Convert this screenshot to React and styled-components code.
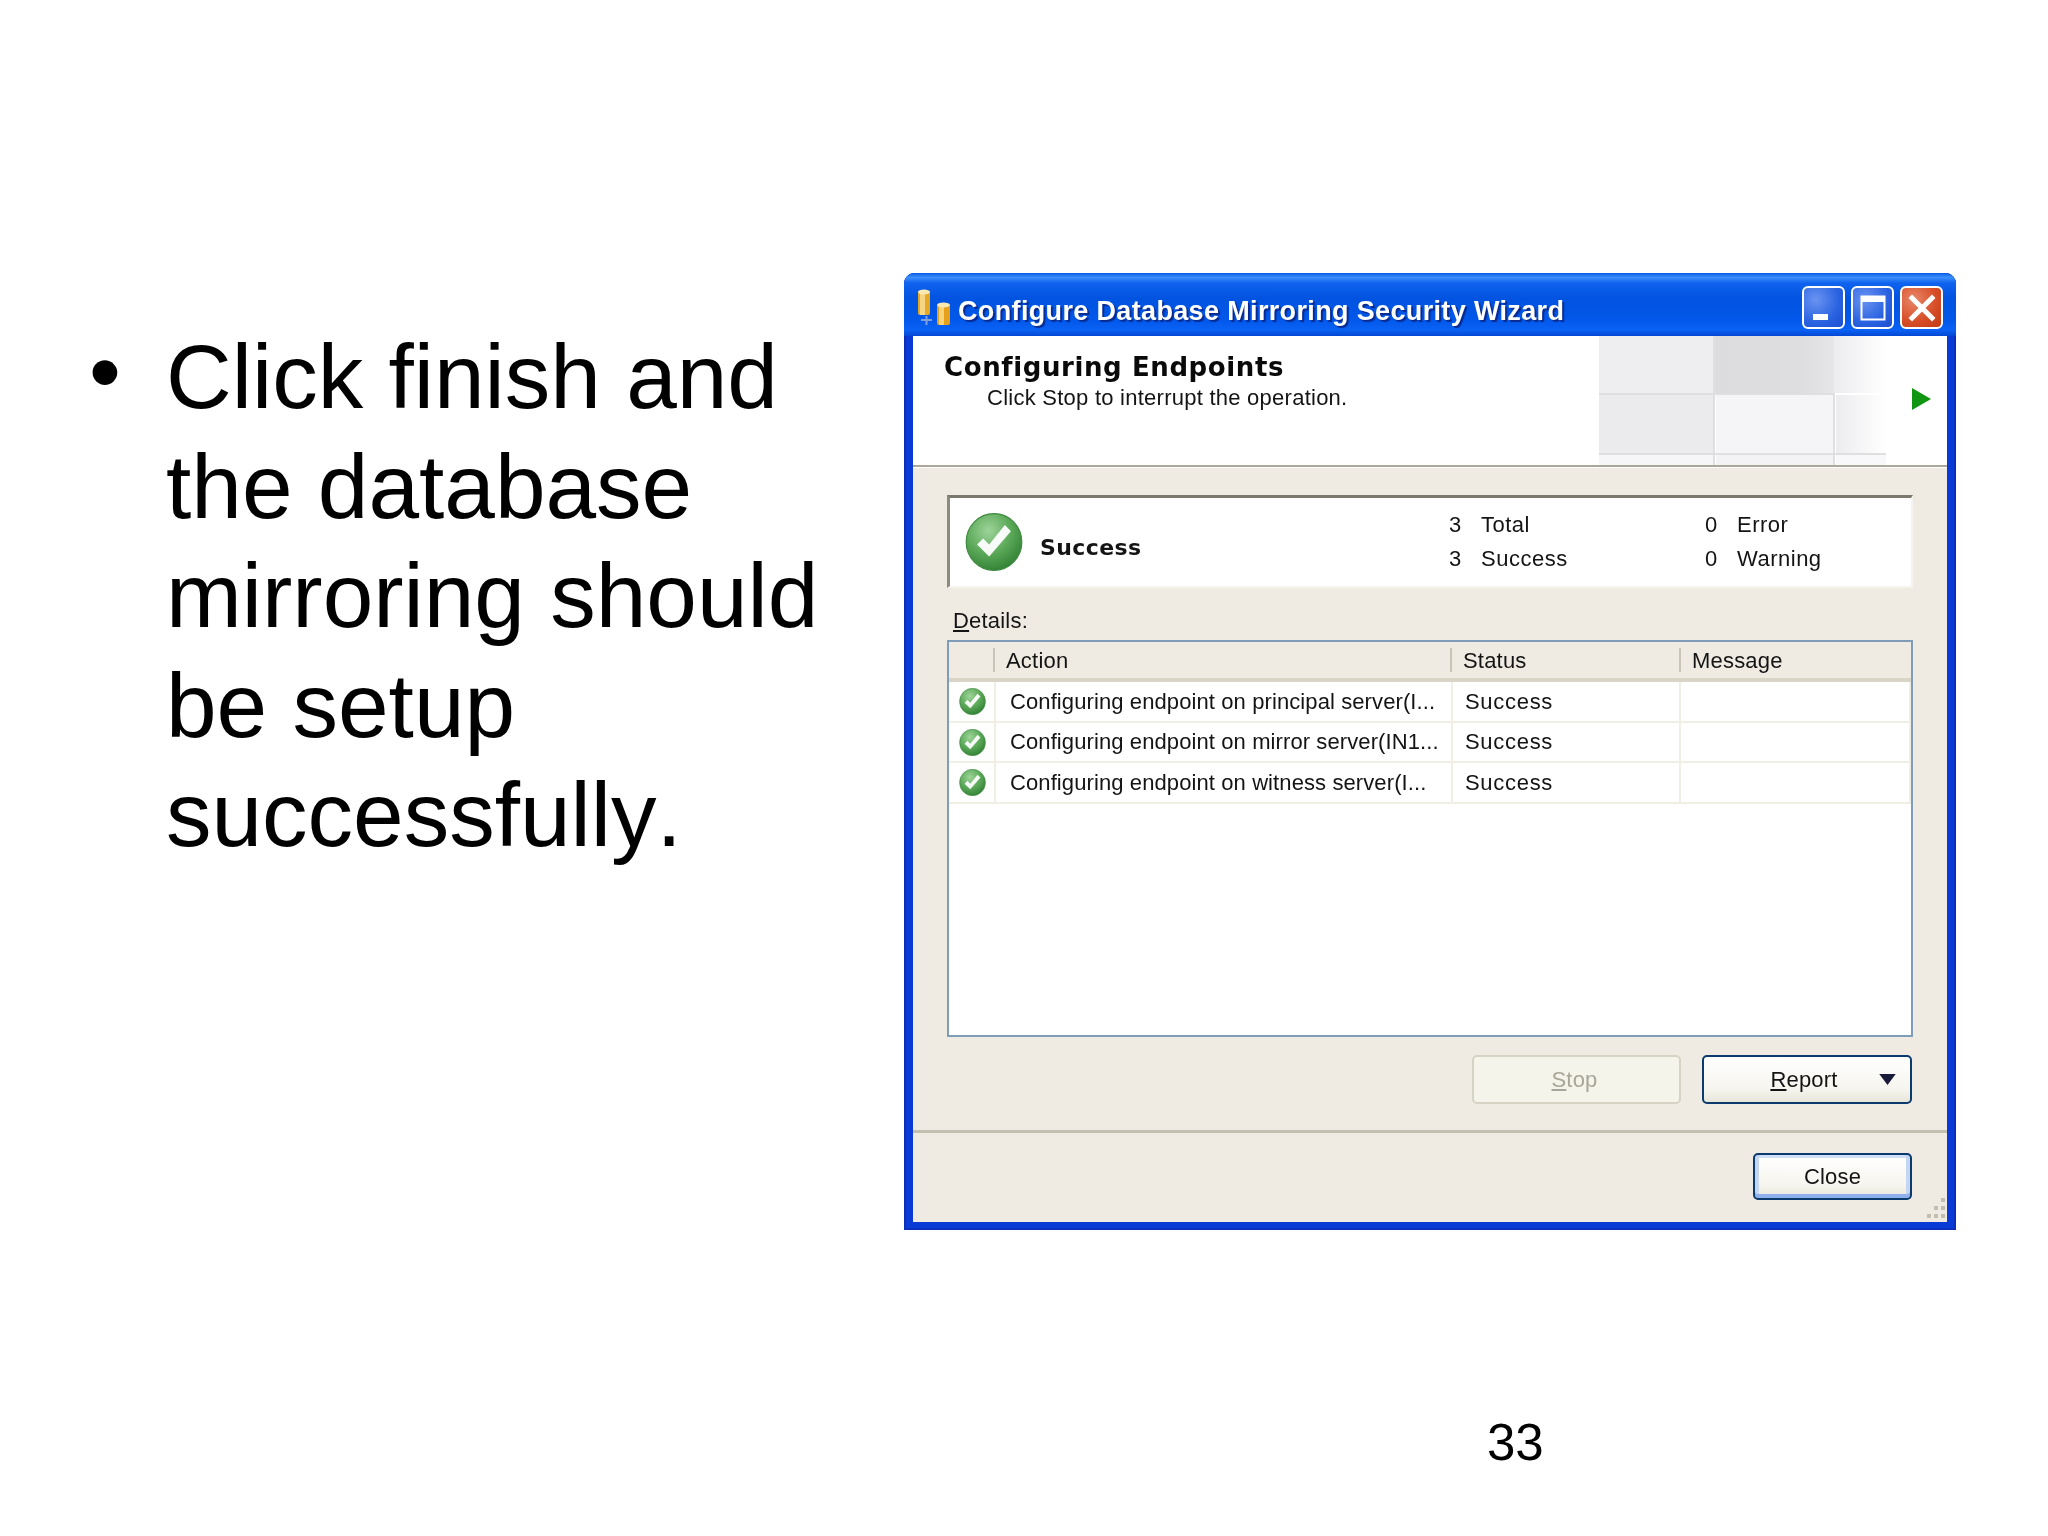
import React from "react"
import styled, {createGlobalStyle} from "styled-components"

const GlobalStyle = createGlobalStyle`
    html, body {
        margin: 0;
        background: #fff;
    }
`

const colors = {
    face: "#efebe2",
    text: "#141414",
    line: "#f1efe4",
    tableBorder: "#7f9db9",
}

const dialogFont = `"Liberation Sans", Arial, sans-serif`

const Slide = styled.div`
    width: 2048px;
    height: 1536px;
    box-sizing: border-box;
    padding: 273px 92px 0;
    display: grid;
    grid-template-columns: 812px 1052px;
    grid-template-rows: auto auto;
    align-content: start;
    font-family: "Liberation Sans", Arial, sans-serif;
    color: #000;
`

const Bullet = styled.div`
    display: flex;
    margin-top: 49px;
    font-size: 91px;
    line-height: 109.6px;
    font-kerning: none;
`

const BulletMark = styled.span`
    width: 77px;
    flex: none;
    margin: -5px 0 0 -3px;
`

const PageNumber = styled.div`
    grid-column: 1 / 3;
    margin-top: 183px;
    padding-left: 1395px;
    font-size: 51px;
`

const Window = styled.div`
    display: flex;
    flex-direction: column;
    height: 957px;
    box-sizing: border-box;
    padding: 0 9px 8px;
    border-radius: 11px 11px 0 0;
    background: #0a3ad6;
    box-shadow: inset 2px 0 0 #0a2fb8, inset -2px 0 0 #0a2fb8, inset 0 -2px 0 #0a2fb8;
    font-family: ${dialogFont};
    font-size: 22px;
    letter-spacing: 0.2px;
    color: ${colors.text};
    filter: blur(0.45px);
`

const TitleBar = styled.div`
    display: flex;
    align-items: center;
    flex: none;
    height: 63px;
    margin: 0 -9px;
    padding: 6px 13px 0 13px;
    box-sizing: border-box;
    border-radius: 11px 11px 0 0;
    background: linear-gradient(180deg, #0a5be8 0%, #3c8efb 7%, #0f63ee 16%, #0253e0 40%, #0258ea 75%, #0a62f4 90%, #0447d4 100%);
`

const TitleText = styled.div`
    flex: 1;
    margin: 7px 0 0 5px;
    font-family: "Liberation Sans", Arial, sans-serif;
    font-weight: 700;
    font-size: 27px;
    letter-spacing: 0.35px;
    color: #fff;
    text-shadow: 2px 2px 1px #0a2a90;
    white-space: nowrap;
`

const Controls = styled.div`
    display: flex;
    gap: 6px;
`

const ControlButton = styled.div`
    display: flex;
    align-items: center;
    justify-content: center;
    width: 43px;
    height: 43px;
    box-sizing: border-box;
    border: 2px solid #fff;
    border-radius: 6px;
    background: ${props => props.$danger
        ? "radial-gradient(circle at 30% 30%, #e8886a, #d8502a 55%, #c23a14)"
        : "radial-gradient(circle at 30% 30%, #6a94f2, #2a62e0 60%, #1c4fd0)"};
`

const Header = styled.div`
    display: flex;
    flex: none;
    height: 129px;
    background: #fff;
`

const HeaderText = styled.div`
    flex: 1;
    padding: 15px 0 0 31px;
`

const HeaderTitle = styled.div`
    font-family: "DejaVu Sans", Verdana, sans-serif;
    font-weight: 700;
    font-size: 26px;
    line-height: 32px;
    letter-spacing: 0.6px;
    color: #0a0a0a;
`

const HeaderHint = styled.div`
    margin-left: 43px;
    line-height: 30px;
    letter-spacing: 0.25px;
`

const Watermark = styled.svg`
    flex: none;
    width: 287px;
    height: 129px;
`

const ArrowSlot = styled.div`
    display: flex;
    align-items: flex-start;
    flex: none;
    width: 61px;
    padding: 52px 0 0 26px;
    box-sizing: border-box;
`

const Body = styled.div`
    display: flex;
    flex-direction: column;
    flex: 1;
    background: ${colors.face};
`

const Divider = styled.div`
    flex: none;
    height: 3px;
    background: #aca899;
    border-bottom: 1px solid #fff;
    box-sizing: border-box;
`

const Content = styled.div`
    display: flex;
    flex-direction: column;
    flex: none;
    padding: 27px 34px 26px;
`

const StatusPanel = styled.div`
    display: grid;
    grid-template-columns: 499px 1fr;
    height: 93px;
    box-sizing: border-box;
    border-top: 3px solid #7b786c;
    border-left: 3px solid #8d8a7e;
    border-right: 2px solid #f6f4ec;
    border-bottom: 2px solid #f6f4ec;
    background: #fff;
`

const StatusLead = styled.div`
    display: flex;
    align-items: center;
    gap: 17px;
    padding-left: 15px;
`

const StatusLabel = styled.div`
    padding-top: 10px;
    font-family: "DejaVu Sans", Verdana, sans-serif;
    font-weight: 700;
    font-size: 22px;
    letter-spacing: 0.4px;
`

const StatusGrid = styled.div`
    display: grid;
    grid-template-columns: 32px 224px 32px 1fr;
    grid-auto-rows: 34px;
    padding-top: 10px;
    line-height: 34px;
    letter-spacing: 0.5px;
`

const DetailsLabel = styled.div`
    margin-top: 17px;
    padding-left: 6px;
    height: 35px;
    line-height: 32px;
`

const AccessKey = styled.span`
    text-decoration: underline;
`

const Table = styled.div`
    display: flex;
    flex-direction: column;
    height: 397px;
    box-sizing: border-box;
    border: 2px solid ${colors.tableBorder};
    background: #fff;
`

const TableHead = styled.div`
    display: grid;
    grid-template-columns: 44px 457px 229px 1fr;
    height: 40px;
    box-sizing: border-box;
    background: ${colors.face};
    border-bottom: 4px solid #d8d4c6;
`

const HeadCell = styled.div`
    padding: 5px 0 0 13px;
    line-height: 28px;
    background: ${props => props.$first
        ? "none"
        : "linear-gradient(#c8c5b8, #c8c5b8) left 6px / 2px 24px no-repeat"};
`

const TableRow = styled.div`
    display: grid;
    grid-template-columns: 47px 457px 228px 1fr;
    height: 40.5px;
    box-sizing: border-box;
    border-bottom: 2px solid ${colors.line};
    line-height: 38px;
`

const RowCell = styled.div`
    display: flex;
    align-items: center;
    padding: 1px 0 0 ${props => props.$pad}px;
    border-right: 2px solid ${colors.line};
    white-space: nowrap;
    overflow: hidden;
    letter-spacing: ${props => props.$spacing || 0.1}px;
`

const ButtonRow = styled.div`
    display: flex;
    justify-content: flex-end;
    gap: 21px;
    margin: 18px 1px 0 0;
`

const Button = styled.div`
    display: flex;
    align-items: center;
    justify-content: center;
    width: ${props => props.$width}px;
    height: ${props => props.$height || 49}px;
    box-sizing: border-box;
    border-radius: 5px;
    border: 2px solid #0a3a6e;
    background: linear-gradient(180deg, #fff 0%, #f6f5ef 70%, #e8e6da 100%);
    box-shadow: ${props => props.$focused ? "inset 0 -4px 0 #8fb0ea, inset 4px 0 0 #c4d6f2, inset -4px 0 0 #c4d6f2, inset 0 3px 0 #cfe0f6" : "none"};
`

const DisabledButton = styled(Button)`
    border-color: #d6d3c4;
    background: #f5f4ea;
    color: #a8a698;
    padding-right: 4px;
`

const ReportButton = styled(Button)`
    position: relative;
    padding-right: 6px;
`

const ReportArrow = styled.svg`
    position: absolute;
    right: 14px;
    top: 17px;
    width: 17px;
    height: 11px;
`

const Footer = styled.div`
    position: relative;
    display: flex;
    justify-content: flex-end;
    align-items: flex-start;
    flex: 1;
    padding: 20px 35px 0 0;
    border-top: 3px solid #c4c0b0;
    box-sizing: border-box;
`

const Grip = styled.svg`
    position: absolute;
    right: 0;
    bottom: 0;
    width: 22px;
    height: 26px;
`

const CheckIcon = ({size}) => (
    <svg width={size} height={size} viewBox="0 0 48 48">
        <defs>
            <radialGradient id="checkFill" cx="40%" cy="30%" r="75%">
                <stop offset="0%" stopColor="#9ed49a" />
                <stop offset="55%" stopColor="#5aa857" />
                <stop offset="100%" stopColor="#2f7f33" />
            </radialGradient>
        </defs>
        <ellipse cx="24" cy="24" rx="23" ry="23.5" fill="url(#checkFill)" stroke="#3f8a42" strokeWidth="1" />
        <path d="M10 26 L20 36 L38 15 L33 10 L20 26 L15 21 Z" fill="#fff" opacity="0.95" />
    </svg>
)

const DatabaseIcon = () => (
    <svg width="36" height="38" viewBox="0 0 36 38" style={{flex: "none"}}>
        <rect x="1" y="2" width="12" height="24" rx="2" fill="#e6a923" />
        <rect x="3" y="2" width="5" height="24" fill="#f6d684" />
        <ellipse cx="7" cy="3" rx="6" ry="2.5" fill="#fbe9b0" />
        <rect x="20" y="16" width="13" height="20" rx="2" fill="#e6a01c" />
        <rect x="22" y="16" width="5" height="20" fill="#f8d478" />
        <ellipse cx="26.5" cy="16" rx="6.5" ry="2.5" fill="#fbe9b0" />
        <path d="M4 31 H15 M9.5 27 V36" stroke="#7fa0dc" strokeWidth="2" />
    </svg>
)

const MinimizeGlyph = () => (
    <svg width="30" height="30" viewBox="0 0 30 30">
        <rect x="4" y="21" width="15" height="6" fill="#fff" />
    </svg>
)

const MaximizeGlyph = () => (
    <svg width="30" height="30" viewBox="0 0 30 30">
        <rect x="3.5" y="3.5" width="23" height="23" fill="none" stroke="#fff" strokeWidth="2" />
        <rect x="3" y="3" width="24" height="6" fill="#fff" />
    </svg>
)

const CloseGlyph = () => (
    <svg width="30" height="30" viewBox="0 0 30 30">
        <path d="M5 5 L25 25 M25 5 L5 25" stroke="#fff" strokeWidth="5" strokeLinecap="square" />
    </svg>
)

const WatermarkArt = () => (
    <Watermark viewBox="0 0 287 129">
        <defs>
            <linearGradient id="fadeRight" x1="0" x2="1" y1="0" y2="0">
                <stop offset="0%" stopColor="#ececef" />
                <stop offset="100%" stopColor="#ffffff" />
            </linearGradient>
            <linearGradient id="topDark" x1="0" x2="1" y1="0" y2="0">
                <stop offset="0%" stopColor="#dcdcdf" />
                <stop offset="75%" stopColor="#dedee1" />
                <stop offset="100%" stopColor="#e6e6e9" />
            </linearGradient>
        </defs>
        <rect x="0" y="0" width="115" height="57" fill="#eeeef0" />
        <rect x="115" y="0" width="120" height="57" fill="url(#topDark)" />
        <rect x="235" y="0" width="52" height="57" fill="url(#fadeRight)" />
        <rect x="0" y="59" width="115" height="58" fill="#ebebed" />
        <rect x="117" y="59" width="118" height="58" fill="#f5f5f7" />
        <rect x="237" y="59" width="50" height="58" fill="url(#fadeRight)" />
        <rect x="0" y="119" width="115" height="10" fill="#f6f6f8" />
        <rect x="117" y="119" width="118" height="10" fill="#f3f3f5" />
        <rect x="237" y="119" width="50" height="10" fill="#f8f8fa" />
        <path d="M0 58 H236 M0 118 H287 M115 0 V129 M235 57 V129" stroke="#dfdfe1" strokeWidth="2" fill="none" />
    </Watermark>
)

const rows = [
    "Configuring endpoint on principal server(I...",
    "Configuring endpoint on mirror server(IN1...",
    "Configuring endpoint on witness server(I...",
]

const App = () => (
    <Slide>
        <GlobalStyle />
        <Bullet>
            <BulletMark>•</BulletMark>
            <div>Click finish and<br />the database<br />mirroring should<br />be setup<br />successfully.</div>
        </Bullet>
        <Window>
            <TitleBar>
                <DatabaseIcon />
                <TitleText>Configure Database Mirroring Security Wizard</TitleText>
                <Controls>
                    <ControlButton><MinimizeGlyph /></ControlButton>
                    <ControlButton><MaximizeGlyph /></ControlButton>
                    <ControlButton $danger><CloseGlyph /></ControlButton>
                </Controls>
            </TitleBar>
            <Header>
                <HeaderText>
                    <HeaderTitle>Configuring Endpoints</HeaderTitle>
                    <HeaderHint>Click Stop to interrupt the operation.</HeaderHint>
                </HeaderText>
                <WatermarkArt />
                <ArrowSlot>
                    <svg width="19" height="22" viewBox="0 0 19 22"><path d="M0 0 L19 11 L0 22 Z" fill="#119611" /></svg>
                </ArrowSlot>
            </Header>
            <Body>
                <Divider />
                <Content>
                    <StatusPanel>
                        <StatusLead>
                            <CheckIcon size={58} />
                            <StatusLabel>Success</StatusLabel>
                        </StatusLead>
                        <StatusGrid>
                            <span>3</span><span>Total</span>
                            <span>0</span><span>Error</span>
                            <span>3</span><span>Success</span>
                            <span>0</span><span>Warning</span>
                        </StatusGrid>
                    </StatusPanel>
                    <DetailsLabel><AccessKey>D</AccessKey>etails:</DetailsLabel>
                    <Table>
                        <TableHead>
                            <HeadCell $first />
                            <HeadCell>Action</HeadCell>
                            <HeadCell>Status</HeadCell>
                            <HeadCell>Message</HeadCell>
                        </TableHead>
                        {rows.map(row => (
                            <TableRow key={row}>
                                <RowCell $pad={10}><CheckIcon size={27} /></RowCell>
                                <RowCell $pad={14}>{row}</RowCell>
                                <RowCell $pad={12} $spacing={0.7}>Success</RowCell>
                                <RowCell />
                            </TableRow>
                        ))}
                    </Table>
                    <ButtonRow>
                        <DisabledButton $width={209}><span><AccessKey>S</AccessKey>top</span></DisabledButton>
                        <ReportButton $width={210}>
                            <span><AccessKey>R</AccessKey>eport</span>
                            <ReportArrow viewBox="0 0 18 12"><path d="M0 0 H18 L9 12 Z" fill="#1a1a3a" /></ReportArrow>
                        </ReportButton>
                    </ButtonRow>
                </Content>
                <Footer>
                    <Button $width={159} $height={47} $focused>Close</Button>
                    <Grip viewBox="0 0 22 26">
                        <g fill="#c2bfb0">
                            <rect x="16" y="2" width="4" height="4" />
                            <rect x="9" y="10" width="4" height="4" />
                            <rect x="16" y="10" width="4" height="4" />
                            <rect x="2" y="18" width="4" height="4" />
                            <rect x="9" y="18" width="4" height="4" />
                            <rect x="16" y="18" width="4" height="4" />
                        </g>
                    </Grip>
                </Footer>
            </Body>
        </Window>
        <PageNumber>33</PageNumber>
    </Slide>
)

export default App
